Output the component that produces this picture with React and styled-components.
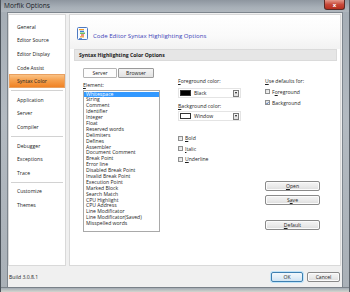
import React from "react";
import styled, { createGlobalStyle } from "styled-components";

const GlobalStyle = createGlobalStyle`
  html, body {
    margin: 0;
    padding: 0;
  }
  body {
    width: 350px;
    height: 292px;
    overflow: hidden;
    font-family: "Open Sans", "Noto Sans", sans-serif;
    color: #1e1e1e;
  }
  u {
    text-decoration-thickness: 0.5px;
    text-underline-offset: 0.5px;
  }
`;

const Window = styled.div`
  width: 350px;
  height: 292px;
  display: flex;
  flex-direction: column;
  box-sizing: border-box;
  border-left: 1px solid #4c535b;
  border-right: 1px solid #5a6169;
  background: linear-gradient(180deg, #a4acb4 0%, #b3bac1 40%, #a9b0b7 100%);
`;

const TitleBar = styled.div`
  height: 12px;
  display: flex;
  align-items: flex-start;
  justify-content: space-between;
  padding-left: 3px;
  padding-right: 4px;
  background: linear-gradient(180deg, #8e969f 0%, #a7afb7 60%, #b0b7be 100%);
`;

const TitleText = styled.span`
  font-size: 6.6px;
  line-height: 12px;
  color: #161a1e;
`;

const CloseButton = styled.div`
  width: 19px;
  height: 9px;
  display: flex;
  align-items: center;
  justify-content: center;
  border: 1px solid #5b2a26;
  border-top: none;
  border-radius: 0 0 3px 3px;
  background: linear-gradient(180deg, #e49a8c 0%, #c8493a 50%, #b5301f 100%);
  color: #fff;
  font-size: 6px;
  font-weight: 700;
`;

const Client = styled.div`
  flex: 1;
  margin: 0 6px;
  display: flex;
  flex-direction: column;
  background: #f0f0f0;
  border: 1px solid #7d858d;
  border-bottom: none;
`;

const MainRow = styled.div`
  height: 252px;
  display: flex;
  gap: 3px;
  padding: 1px 1px 0 0;
`;

const Sidebar = styled.div`
  width: 58px;
  box-sizing: border-box;
  display: flex;
  flex-direction: column;
  padding-top: 5px;
  background: #fff;
  border: 1px solid #d9d9d9;
`;

const NavItem = styled.div`
  height: 13.6px;
  flex-shrink: 0;
  display: flex;
  align-items: center;
  padding-left: 8px;
  font-size: 5.1px;
  color: #222;
  background: ${(p) =>
    p.active
      ? "linear-gradient(180deg, #fbc88e 0%, #f6a04e 45%, #ef7e1f 100%)"
      : "transparent"};
  box-shadow: ${(p) => (p.active ? "inset 0 0 0 1px #e8a060" : "none")};
`;

const NavSep = styled.div`
  height: 5px;
  flex-shrink: 0;
  display: flex;
  align-items: center;
  padding: 0 2px;
  &::after {
    content: "";
    flex: 1;
    height: 1px;
    background: #d2d2d2;
  }
`;

const Panel = styled.div`
  flex: 1;
  display: flex;
  flex-direction: column;
  background: #fff;
  border: 1px solid #d9d9d9;
  box-sizing: border-box;
`;

const Header = styled.div`
  height: 34px;
  display: flex;
  align-items: flex-end;
  gap: 5px;
  padding: 0 0 9px 7px;
  box-sizing: border-box;
  background: linear-gradient(180deg, #ffffff 0%, #fafafa 60%, #f2f2f2 100%);
`;

const HeaderTitle = styled.span`
  font-size: 6.1px;
  font-weight: 500;
  color: #3d43b8;
  line-height: 8px;
`;

const SectionBar = styled.div`
  height: 12px;
  margin: 0 3px 0 4px;
  display: flex;
  align-items: center;
  padding-left: 4px;
  background: #e6e6e6;
  border: 1px solid #dadada;
  box-sizing: border-box;
  font-size: 5.1px;
  font-weight: 700;
  color: #1a1a1a;
`;

const Columns = styled.div`
  display: grid;
  grid-template-columns: 95px 87px 55px;
  padding-left: 13px;
`;

const Column = styled.div`
  display: flex;
  flex-direction: column;
  padding-top: ${(p) => p.top || 0}px;
`;

const TabRow = styled.div`
  display: flex;
  gap: 1px;
  margin-top: 7px;
`;

const Tab = styled.div`
  width: ${(p) => p.w}px;
  height: 10px;
  box-sizing: border-box;
  display: flex;
  align-items: center;
  justify-content: center;
  font-size: 5.1px;
  border: 1px solid ${(p) => (p.selected ? "#b4b4b4" : "#9a9a9a")};
  border-radius: 1px;
  background: ${(p) =>
    p.selected ? "#fdfdfd" : "linear-gradient(180deg, #f4f4f4 0%, #e2e2e2 100%)"};
`;

const Label = styled.div`
  font-size: 5.1px;
  line-height: 7px;
  margin-top: ${(p) => p.mt || 0}px;
  color: #1e1e1e;
`;

const ListBox = styled.div`
  width: 77px;
  height: 142px;
  margin-top: 1px;
  box-sizing: border-box;
  padding-top: 0.5px;
  border: 1px solid #a9a9a9;
  background: #fff;
  display: flex;
  flex-direction: column;
`;

const ListItem = styled.div`
  height: 5.9px;
  line-height: 5.9px;
  padding-left: 2px;
  font-size: 5.1px;
  white-space: nowrap;
  color: ${(p) => (p.selected ? "#fff" : "#1e1e1e")};
  background: ${(p) => (p.selected ? "#3399ff" : "transparent")};
`;

const Combo = styled.div`
  width: 63px;
  height: 10px;
  margin-top: ${(p) => p.mt || 0}px;
  box-sizing: border-box;
  display: flex;
  align-items: center;
  gap: 3px;
  padding: 0 1px 0 1px;
  background: #fff;
  border: 1px solid #e4e4e4;
  font-size: 5.1px;
`;

const Swatch = styled.div`
  width: 11px;
  height: 6px;
  box-sizing: border-box;
  background: ${(p) => p.color};
  border: 1px solid #333;
`;

const DropButton = styled.div`
  margin-left: auto;
  width: 6px;
  height: 7px;
  box-sizing: border-box;
  display: flex;
  align-items: center;
  justify-content: center;
  border: 1px solid #7a7a7a;
  background: linear-gradient(180deg, #f6f6f6 0%, #dedede 100%);
  &::after {
    content: "";
    border-left: 1.5px solid transparent;
    border-right: 1.5px solid transparent;
    border-top: 2px solid #111;
  }
`;

const CheckRow = styled.div`
  height: ${(p) => p.h || 10.5}px;
  margin-top: ${(p) => p.mt || 0}px;
  display: flex;
  align-items: center;
  gap: 2px;
  font-size: 5.1px;
`;

const CheckBox = styled.div`
  width: 5px;
  height: 5px;
  box-sizing: border-box;
  border: 1px solid #8e8f8f;
  background: linear-gradient(135deg, #dcdcdc 0%, #f8f8f8 100%);
  display: flex;
  align-items: center;
  justify-content: center;
`;

const Button = styled.div`
  width: ${(p) => p.w || 55}px;
  height: 10px;
  margin-top: ${(p) => p.mt || 0}px;
  box-sizing: border-box;
  display: flex;
  align-items: center;
  justify-content: center;
  font-size: 5.1px;
  border: 1px solid ${(p) => (p.primary ? "#3c7fb1" : "#8a8a8a")};
  border-radius: 2px;
  background: ${(p) =>
    p.primary
      ? "linear-gradient(180deg, #f2f8fc 0%, #e3eff8 50%, #cfe4f3 100%)"
      : "linear-gradient(180deg, #f4f4f4 0%, #ebebeb 50%, #dcdcdc 100%)"};
  box-shadow: ${(p) => (p.primary ? "0 0 0 1px #bfe3f8" : "inset 0 0 0 1px #fbfbfb")};
`;

const Footer = styled.div`
  flex: 1;
  display: flex;
  align-items: center;
  padding: 0 2px 0 1px;
  gap: 4px;
`;

const BuildText = styled.span`
  font-size: 5.1px;
  margin-right: auto;
`;

const BottomFrame = styled.div`
  height: 5px;
  background: linear-gradient(180deg, #636a72 0%, #a9b0b7 30%, #d3d6cf 100%);
`;

const FileIcon = () => (
  <svg width="11" height="13" viewBox="0 0 11 13">
    <rect x="0.5" y="0.5" width="10" height="12" rx="1" fill="#f7fbff" stroke="#4d79c1" />
    <rect x="2" y="2" width="5" height="1.2" fill="#f19a2a" />
    <rect x="3" y="3.8" width="4" height="1.2" fill="#3b7dd8" />
    <rect x="3" y="5.6" width="5" height="1.2" fill="#4caf3f" />
    <rect x="4" y="7.4" width="3" height="1.2" fill="#e04a3a" />
    <rect x="3" y="9.2" width="4" height="1.2" fill="#f19a2a" />
    <rect x="2" y="11" width="3" height="0.8" fill="#3b7dd8" />
  </svg>
);

const CheckMark = () => (
  <svg width="4" height="4" viewBox="0 0 4 4">
    <path d="M0.4 2 L1.5 3.2 L3.6 0.6" fill="none" stroke="#2657a8" strokeWidth="0.9" />
  </svg>
);

const navGroups = [
  ["General", "Editor Source", "Editor Display", "Code Assist", "Syntax Color"],
  ["Application", "Server", "Compiler"],
  ["Debugger", "Exceptions", "Trace"],
  ["Customize", "Themes"],
];

const elements = [
  "Whitespace",
  "String",
  "Comment",
  "Identifier",
  "Integer",
  "Float",
  "Reserved words",
  "Delimiters",
  "Defines",
  "Assembler",
  "Document Comment",
  "Break Point",
  "Error line",
  "Disabled Break Point",
  "Invalid Break Point",
  "Execution Point",
  "Marked Block",
  "Search Match",
  "CPU Highlight",
  "CPU Address",
  "Line Modificator",
  "Line Modificator(Saved)",
  "Misspelled words",
];

const App = () => {
  return (
    <>
      <GlobalStyle />
      <Window>
        <TitleBar>
          <TitleText>Morfik Options</TitleText>
          <CloseButton>x</CloseButton>
        </TitleBar>
        <Client>
          <MainRow>
            <Sidebar>
              {navGroups.map((group, gi) => (
                <React.Fragment key={gi}>
                  {gi > 0 && <NavSep />}
                  {group.map((name) => (
                    <NavItem key={name} active={name === "Syntax Color"}>
                      {name}
                    </NavItem>
                  ))}
                </React.Fragment>
              ))}
            </Sidebar>
            <Panel>
              <Header>
                <FileIcon />
                <HeaderTitle>Code Editor Syntax Highlighting Options</HeaderTitle>
              </Header>
              <SectionBar>Syntax Highlighting Color Options</SectionBar>
              <Columns>
                <Column>
                  <TabRow>
                    <Tab selected w={34}>Server</Tab>
                    <Tab w={36}>Browser</Tab>
                  </TabRow>
                  <Label mt={4}>
                    <u>E</u>lement:
                  </Label>
                  <ListBox>
                    {elements.map((el, i) => (
                      <ListItem key={el} selected={i === 0}>
                        {el}
                      </ListItem>
                    ))}
                  </ListBox>
                </Column>
                <Column top={17}>
                  <Label>
                    <u>F</u>oreground color:
                  </Label>
                  <Combo mt={3}>
                    <Swatch color="#000" />
                    Black
                    <DropButton />
                  </Combo>
                  <Label mt={5}>
                    <u>B</u>ackground color:
                  </Label>
                  <Combo mt={1}>
                    <Swatch color="#fff" />
                    Window
                    <DropButton />
                  </Combo>
                  <CheckRow mt={12}>
                    <CheckBox />
                    <span>
                      <u>B</u>old
                    </span>
                  </CheckRow>
                  <CheckRow>
                    <CheckBox />
                    <span>
                      <u>I</u>talic
                    </span>
                  </CheckRow>
                  <CheckRow>
                    <CheckBox />
                    <span>
                      <u>U</u>nderline
                    </span>
                  </CheckRow>
                </Column>
                <Column top={17}>
                  <Label>
                    <u>U</u>se defaults for:
                  </Label>
                  <CheckRow h={11} mt={1}>
                    <CheckBox />
                    <span>
                      F<u>o</u>reground
                    </span>
                  </CheckRow>
                  <CheckRow h={11}>
                    <CheckBox>
                      <CheckMark />
                    </CheckBox>
                    <span>Background</span>
                  </CheckRow>
                  <Button mt={73}>
                    <u>O</u>pen
                  </Button>
                  <Button mt={4}>
                    S<u>a</u>ve
                  </Button>
                  <Button mt={15}>
                    <u>D</u>efault
                  </Button>
                </Column>
              </Columns>
            </Panel>
          </MainRow>
          <Footer>
            <BuildText>Build 3.0.8.1</BuildText>
            <Button primary w={32}>
              OK
            </Button>
            <Button w={33}>Cancel</Button>
          </Footer>
        </Client>
        <BottomFrame />
      </Window>
    </>
  );
};

export default App;
